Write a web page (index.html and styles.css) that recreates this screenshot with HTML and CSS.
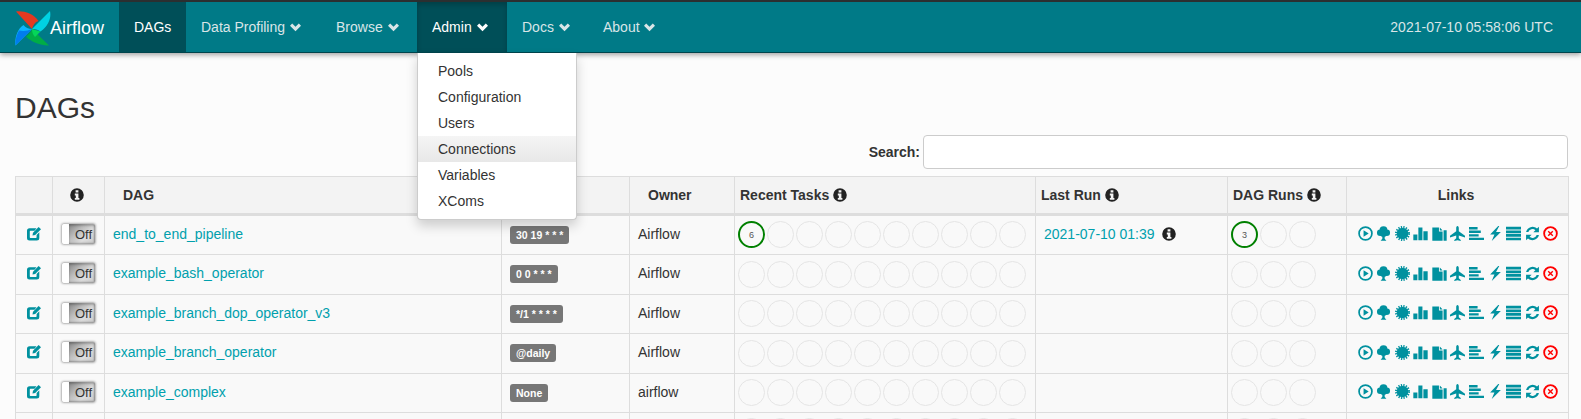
FILE: index.html
```html
<!DOCTYPE html>
<html lang="en">
<head>
<meta charset="utf-8">
<title>DAGs - Airflow</title>
<link rel="stylesheet" href="styles.css">
</head>
<body>
<svg class="defs" width="0" height="0" aria-hidden="true">
  <symbol id="i-chev" viewBox="0 0 11 9"><path d="M0 2.700 L2.200 .5 L5.500 3.800 L8.800 .5 L11 2.700 L5.500 8.200 Z"/></symbol>
  <symbol id="i-info" viewBox="0 0 14 14"><path fill-rule="evenodd" d="M7 .2a6.800 6.800 0 1 0 0 13.600A6.800 6.800 0 0 0 7 .2zM5.600 2.200h2.800v2.200H5.600zM4.800 5.600h3.600v4.400h1v1.800H4.800V10h1V7.400h-1z"/></symbol>
  <symbol id="i-edit" viewBox="0 0 14 14"><path fill-rule="evenodd" d="M2.500 1.200H9.500L7.500 3.800H3.400a.6.6 0 0 0-.6.6V10.300a.6.6 0 0 0 .6.6H9a.6.6 0 0 0 .6-.6V8L12.300 5.300V11a2.500 2.500 0 0 1-2.500 2.500H2.500A2.500 2.500 0 0 1 0 11V3.700A2.500 2.500 0 0 1 2.500 1.200Z"/><path d="M11.600 0L14 2.200L8.200 8L5.500 8.500L6 5.800Z"/></symbol>
  <symbol id="i-play" viewBox="0 0 14 14"><path fill-rule="evenodd" d="M7 .2a6.800 6.800 0 1 0 0 13.600A6.800 6.800 0 0 0 7 .2zM7 1.800a5.200 5.200 0 1 1 0 10.400A5.200 5.200 0 0 1 7 1.800z"/><path d="M5.200 4v6l4.800-3z"/></symbol>
  <symbol id="i-tree" viewBox="0 0 14 14"><circle cx="7" cy="3.900" r="3.700"/><circle cx="3.900" cy="6.300" r="3"/><circle cx="10.100" cy="6.300" r="3"/><circle cx="7" cy="7.200" r="3"/><path d="M5.900 9h2.200v2.800l1.600 1.900H4.300l1.600-1.900z"/></symbol>
  <symbol id="i-cert" viewBox="0 0 14 14"><circle cx="7" cy="7" r="5.400"/><circle cx="7" cy="7" r="6" fill="none" stroke="currentColor" stroke-width="2" stroke-dasharray="1.180 1.180"/></symbol>
  <symbol id="i-bars" viewBox="0 0 14 14"><path d="M.3 8h3.800v5.300H.3zM5 1.500h3.800v11.800H5zM9.700 5h4v8.300h-4z"/></symbol>
  <symbol id="i-files" viewBox="0 0 14 14"><path d="M.3 1.500h6.200v3.600h3.400v8.600H.3zM7.300 1.500l2.600 2.800H7.300zM10.800 4h2.900v9.700h-2.900z"/></symbol>
  <symbol id="i-plane" viewBox="0 0 14 14"><path d="M7 0C7.800 0 8.200 1 8.200 2V5L14 9V10.800L8.200 8.800V11.500L10 13V14L7 13.200L4 14V13L5.800 11.500V8.800L0 10.800V9L5.800 5V2C5.800 1 6.200 0 7 0Z"/></symbol>
  <symbol id="i-gantt" viewBox="0 0 14 14"><path d="M0 1h8v2.200H0zM0 4.300h11v2.200H0zM0 7.600h9v2.200H0zM0 10.900h14v2.200H0z"/></symbol>
  <symbol id="i-bolt" viewBox="0 0 14 14"><path d="M9.500 0L2 8H6L3.500 14L12 5.500H7.500L10.500 0Z"/></symbol>
  <symbol id="i-list" viewBox="0 0 14 14"><path d="M0 .8h14v2.500H0zM0 4.200h14v2.500H0zM0 7.500h14v2.500H0zM0 10.900h14v2.500H0z"/></symbol>
  <symbol id="i-sync" viewBox="0 0 14 14"><path d="M13 .6v5.200H7.800l1.900-1.900A4.100 4.100 0 0 0 3.100 5.700H1A6.200 6.200 0 0 1 11.200 2.400zM1 13.400V8.200h5.200l-1.900 1.900a4.100 4.100 0 0 0 6.600-1.800H13A6.200 6.200 0 0 1 2.800 11.600z"/></symbol>
  <symbol id="i-del" viewBox="0 0 14 14"><path fill-rule="evenodd" d="M7 .2a6.800 6.800 0 1 0 0 13.600A6.800 6.800 0 0 0 7 .2zM7 1.900a5.100 5.100 0 1 1 0 10.200A5.100 5.100 0 0 1 7 1.900z"/><path d="M5.300 4.400L7 6.100 8.700 4.400 9.600 5.300 7.900 7 9.600 8.700 8.700 9.600 7 7.900 5.300 9.600 4.400 8.700 6.100 7 4.400 5.300z"/></symbol>
</svg>

<nav class="navbar">
  <a class="brand">
    <svg class="logo" viewBox="0 0 36 36" width="36" height="36" aria-hidden="true">
      <path fill="#e43921" d="M17 19 L1 1.500 C8 .5 18 3 23.500 11 C20 12 18 15 17 19Z"/>
      <path fill="#00d2e3" d="M17 19 L35 1 C36.500 8 33.500 16 25.500 21.500 C23 19.500 20 19 17 19Z"/>
      <path fill="#00ad46" d="M17 19 L34 35.500 C27 36 16 32 11 26.500 C13.500 25 16 22 17 19Z"/>
      <path fill="#04d659" d="M17 19 L25.500 21.500 L20 27 C18 25 17 22 17 19Z"/>
      <path fill="#0cb6ff" d="M17 19 L.5 35.500 C-.5 29 2 19 8.500 15 C10.500 17.500 13.500 19 17 19Z"/>
      <path fill="#017cee" d="M17 19 L.5 35.500 C0 30 1.500 25 4 20.500 C8 21.500 13 21 17 19Z"/>
    </svg>
    <span class="brand-name">Airflow</span>
  </a>
  <ul class="nav">
    <li class="nav-item nav-active w-dags"><a>DAGs</a></li>
    <li class="nav-item w-profiling"><a>Data Profiling <svg class="chev"><use href="#i-chev"/></svg></a></li>
    <li class="nav-item w-browse"><a>Browse <svg class="chev"><use href="#i-chev"/></svg></a></li>
    <li class="nav-item nav-open w-admin">
      <a>Admin <svg class="chev"><use href="#i-chev"/></svg></a>
      <ul class="menu">
        <li>Pools</li>
        <li>Configuration</li>
        <li>Users</li>
        <li class="menu-hover">Connections</li>
        <li>Variables</li>
        <li>XComs</li>
      </ul>
    </li>
    <li class="nav-item w-docs"><a>Docs <svg class="chev"><use href="#i-chev"/></svg></a></li>
    <li class="nav-item w-about"><a>About <svg class="chev"><use href="#i-chev"/></svg></a></li>
  </ul>
  <span class="clock">2021-07-10 05:58:06 UTC</span>
</nav>

<main class="page">
  <h2 class="title">DAGs</h2>
  <div class="search-row">
    <label class="search-label">Search:</label>
    <input class="search-input" type="text">
  </div>
  <table class="dags">
    <colgroup>
      <col class="c-edit"><col class="c-toggle"><col class="c-dag"><col class="c-sched"><col class="c-owner"><col class="c-tasks"><col class="c-last"><col class="c-runs"><col class="c-links">
    </colgroup>
    <thead>
      <tr>
        <th></th>
        <th class="center"><svg class="info"><use href="#i-info"/></svg></th>
        <th class="th-wide">DAG</th>
        <th class="th-sched">Schedule</th>
        <th class="th-wide">Owner</th>
        <th>Recent Tasks <svg class="info"><use href="#i-info"/></svg></th>
        <th>Last Run <svg class="info"><use href="#i-info"/></svg></th>
        <th>DAG Runs <svg class="info"><use href="#i-info"/></svg></th>
        <th class="center">Links</th>
      </tr>
    </thead>
    <tbody>
      <tr>
        <td class="center"><svg class="edit"><use href="#i-edit"/></svg></td>
        <td class="center"><span class="toggle"><span class="toggle-knob"></span><span class="toggle-off">Off</span></span></td>
        <td><a class="link">end_to_end_pipeline</a></td>
        <td><span class="badge">30 19 * * *</span></td>
        <td>Airflow</td>
        <td class="cell-circles"><span class="circles"><span class="ring ring-run">6</span><span class="ring"></span><span class="ring"></span><span class="ring"></span><span class="ring"></span><span class="ring"></span><span class="ring"></span><span class="ring"></span><span class="ring"></span><span class="ring"></span></span></td>
        <td class="cell-last"><a class="link">2021-07-10 01:39</a><svg class="info info-last"><use href="#i-info"/></svg></td>
        <td class="cell-circles"><span class="circles"><span class="ring ring-run">3</span><span class="ring"></span><span class="ring"></span></span></td>
        <td class="cell-links"><span class="links"><svg><use href="#i-play"/></svg><svg><use href="#i-tree"/></svg><svg><use href="#i-cert"/></svg><svg><use href="#i-bars"/></svg><svg><use href="#i-files"/></svg><svg><use href="#i-plane"/></svg><svg><use href="#i-gantt"/></svg><svg><use href="#i-bolt"/></svg><svg><use href="#i-list"/></svg><svg><use href="#i-sync"/></svg><svg class="del"><use href="#i-del"/></svg></span></td>
      </tr>
      <tr>
        <td class="center"><svg class="edit"><use href="#i-edit"/></svg></td>
        <td class="center"><span class="toggle"><span class="toggle-knob"></span><span class="toggle-off">Off</span></span></td>
        <td><a class="link">example_bash_operator</a></td>
        <td><span class="badge">0 0 * * *</span></td>
        <td>Airflow</td>
        <td class="cell-circles"><span class="circles"><span class="ring"></span><span class="ring"></span><span class="ring"></span><span class="ring"></span><span class="ring"></span><span class="ring"></span><span class="ring"></span><span class="ring"></span><span class="ring"></span><span class="ring"></span></span></td>
        <td class="cell-last"></td>
        <td class="cell-circles"><span class="circles"><span class="ring"></span><span class="ring"></span><span class="ring"></span></span></td>
        <td class="cell-links"><span class="links"><svg><use href="#i-play"/></svg><svg><use href="#i-tree"/></svg><svg><use href="#i-cert"/></svg><svg><use href="#i-bars"/></svg><svg><use href="#i-files"/></svg><svg><use href="#i-plane"/></svg><svg><use href="#i-gantt"/></svg><svg><use href="#i-bolt"/></svg><svg><use href="#i-list"/></svg><svg><use href="#i-sync"/></svg><svg class="del"><use href="#i-del"/></svg></span></td>
      </tr>
      <tr>
        <td class="center"><svg class="edit"><use href="#i-edit"/></svg></td>
        <td class="center"><span class="toggle"><span class="toggle-knob"></span><span class="toggle-off">Off</span></span></td>
        <td><a class="link">example_branch_dop_operator_v3</a></td>
        <td><span class="badge">*/1 * * * *</span></td>
        <td>Airflow</td>
        <td class="cell-circles"><span class="circles"><span class="ring"></span><span class="ring"></span><span class="ring"></span><span class="ring"></span><span class="ring"></span><span class="ring"></span><span class="ring"></span><span class="ring"></span><span class="ring"></span><span class="ring"></span></span></td>
        <td class="cell-last"></td>
        <td class="cell-circles"><span class="circles"><span class="ring"></span><span class="ring"></span><span class="ring"></span></span></td>
        <td class="cell-links"><span class="links"><svg><use href="#i-play"/></svg><svg><use href="#i-tree"/></svg><svg><use href="#i-cert"/></svg><svg><use href="#i-bars"/></svg><svg><use href="#i-files"/></svg><svg><use href="#i-plane"/></svg><svg><use href="#i-gantt"/></svg><svg><use href="#i-bolt"/></svg><svg><use href="#i-list"/></svg><svg><use href="#i-sync"/></svg><svg class="del"><use href="#i-del"/></svg></span></td>
      </tr>
      <tr>
        <td class="center"><svg class="edit"><use href="#i-edit"/></svg></td>
        <td class="center"><span class="toggle"><span class="toggle-knob"></span><span class="toggle-off">Off</span></span></td>
        <td><a class="link">example_branch_operator</a></td>
        <td><span class="badge">@daily</span></td>
        <td>Airflow</td>
        <td class="cell-circles"><span class="circles"><span class="ring"></span><span class="ring"></span><span class="ring"></span><span class="ring"></span><span class="ring"></span><span class="ring"></span><span class="ring"></span><span class="ring"></span><span class="ring"></span><span class="ring"></span></span></td>
        <td class="cell-last"></td>
        <td class="cell-circles"><span class="circles"><span class="ring"></span><span class="ring"></span><span class="ring"></span></span></td>
        <td class="cell-links"><span class="links"><svg><use href="#i-play"/></svg><svg><use href="#i-tree"/></svg><svg><use href="#i-cert"/></svg><svg><use href="#i-bars"/></svg><svg><use href="#i-files"/></svg><svg><use href="#i-plane"/></svg><svg><use href="#i-gantt"/></svg><svg><use href="#i-bolt"/></svg><svg><use href="#i-list"/></svg><svg><use href="#i-sync"/></svg><svg class="del"><use href="#i-del"/></svg></span></td>
      </tr>
      <tr>
        <td class="center"><svg class="edit"><use href="#i-edit"/></svg></td>
        <td class="center"><span class="toggle"><span class="toggle-knob"></span><span class="toggle-off">Off</span></span></td>
        <td><a class="link">example_complex</a></td>
        <td><span class="badge">None</span></td>
        <td>airflow</td>
        <td class="cell-circles"><span class="circles"><span class="ring"></span><span class="ring"></span><span class="ring"></span><span class="ring"></span><span class="ring"></span><span class="ring"></span><span class="ring"></span><span class="ring"></span><span class="ring"></span><span class="ring"></span></span></td>
        <td class="cell-last"></td>
        <td class="cell-circles"><span class="circles"><span class="ring"></span><span class="ring"></span><span class="ring"></span></span></td>
        <td class="cell-links"><span class="links"><svg><use href="#i-play"/></svg><svg><use href="#i-tree"/></svg><svg><use href="#i-cert"/></svg><svg><use href="#i-bars"/></svg><svg><use href="#i-files"/></svg><svg><use href="#i-plane"/></svg><svg><use href="#i-gantt"/></svg><svg><use href="#i-bolt"/></svg><svg><use href="#i-list"/></svg><svg><use href="#i-sync"/></svg><svg class="del"><use href="#i-del"/></svg></span></td>
      </tr>
      <tr>
        <td></td><td></td><td></td><td></td><td></td>
        <td class="cell-circles"><span class="circles"><span class="ring"></span><span class="ring"></span><span class="ring"></span><span class="ring"></span><span class="ring"></span><span class="ring"></span><span class="ring"></span><span class="ring"></span><span class="ring"></span><span class="ring"></span></span></td>
        <td></td>
        <td class="cell-circles"><span class="circles"><span class="ring"></span><span class="ring"></span><span class="ring"></span></span></td>
        <td></td>
      </tr>
    </tbody>
  </table>
</main>
</body>
</html>
```
FILE: styles.css
```css
* { box-sizing: border-box; }
html, body { height: 419px; overflow: hidden; }
body {
  margin: 0;
  background: #fcfcfc;
  color: #333;
  font-family: "Liberation Sans", Arial, sans-serif;
  font-size: 14px;
  line-height: 20px;
}
.defs { position: absolute; }

.navbar {
  display: flex;
  align-items: stretch;
  height: 53px;
  background: #007a87;
  border-top: 2px solid #2b2f30;
  border-bottom: 1px solid #00454d;
  box-shadow: 0 2px 5px rgba(0, 0, 0, .35);
  position: relative;
  z-index: 5;
}
.brand { display: flex; align-items: center; width: 119px; padding-left: 15px; }
.logo { flex: none; margin-top: 1px; }
.brand-name { color: #fff; font-size: 18px; margin-left: -1px; margin-top: 1px; }
.nav { display: flex; list-style: none; margin: 0; padding: 0; }
.nav-item { position: relative; display: flex; }
.nav-item > a { display: flex; align-items: center; width: 100%; padding: 0 0 0 15px; color: #d9e5e7; white-space: pre; }
.w-dags { width: 67px; }
.w-profiling { width: 135px; }
.w-browse { width: 96px; }
.w-admin { width: 90px; }
.w-docs { width: 81px; }
.w-about { width: 88px; }
.nav-active > a { background: #004f58; color: #fff; }
.nav-open > a { background: #004f58; color: #fff; box-shadow: inset 0 3px 5px rgba(0,0,0,.2); }
.chev { width: 11px; height: 9px; margin-left: 1px; fill: currentColor; }
.clock { margin-left: auto; align-self: center; padding-right: 28px; color: #d9e5e7; font-size: 14px; }

.menu {
  position: absolute;
  top: 51px;
  left: 0;
  width: 160px;
  margin: 0;
  padding: 5px 0;
  list-style: none;
  background: #fff;
  border: 1px solid #ccc;
  border-top: 0;
  border-radius: 0 0 4px 4px;
  box-shadow: 0 6px 12px rgba(0, 0, 0, .175);
}
.menu li { height: 26px; line-height: 26px; padding-left: 20px; color: #333; }
.menu .menu-hover { background: linear-gradient(#f5f5f5, #e8e8e8); }

.page { padding: 0 13px 0 15px; }
.title { margin: 38px 0 0; height: 33px; font-size: 30px; font-weight: 500; line-height: 33px; }
.search-row { display: flex; justify-content: flex-end; align-items: center; gap: 3px; margin-top: 11px; }
.search-label { font-size: 14px; font-weight: 700; }
.search-input { width: 645px; height: 34px; background: #fff; border: 1px solid #ccc; border-radius: 4px; }

.dags { width: 1553px; margin-top: 7px; table-layout: fixed; border-collapse: collapse; background: #f9f9f9; }
.c-edit { width: 37px; }
.c-toggle { width: 52px; }
.c-dag { width: 397px; }
.c-sched { width: 128px; }
.c-owner { width: 105px; }
.c-tasks { width: 301px; }
.c-last { width: 192px; }
.c-runs { width: 119px; }
.c-links { width: 222px; }
.dags th, .dags td { border: 1px solid #ddd; padding: 0 8px; text-align: left; vertical-align: middle; }
.dags th { height: 38px; background: #f3f3f3; border-bottom: 3px solid #ddd; font-weight: 700; padding-left: 5px; white-space: nowrap; }
.dags td { height: 40px; padding-bottom: 2px; }
.dags tr:nth-child(even) td:not(.cell-circles):not(.cell-links) { padding-bottom: 4px; }
.dags tr:nth-child(3) td, .dags tr:nth-child(5) td, .dags tr:nth-child(6) td { height: 39px; }
.dags .center { text-align: center; }
.dags .th-wide { padding-left: 18px; }
.dags .th-sched { padding-left: 8px; }

.info { width: 14px; height: 14px; fill: #222; vertical-align: -2px; }
.info-last { margin-left: 7px; }
.edit { width: 14px; height: 14px; fill: #00919f; display: block; margin: 0 auto; }
.link { color: #00a0ad; }

.toggle { display: inline-flex; width: 35px; height: 22px; border-radius: 3px; overflow: hidden; vertical-align: middle; border: 1px solid #c4c4c4; box-shadow: 0 0 2px rgba(0,0,0,.3); }
.toggle-knob { width: 7px; background: #fff; flex: none; border-radius: 3px; }
.toggle-off { flex: 1; font-size: 13px; line-height: 22px; text-align: right; padding-right: 3px; background: linear-gradient(135deg, #858585 0%, #bcbcbc 35%, #dedede 65%, #cacaca 100%); box-shadow: inset -1px -1px 2px rgba(0,0,0,.3), inset 0 2px 2px rgba(0,0,0,.2); }

.badge { display: inline-block; padding: 3px 6px; background: #777; color: #fff; border-radius: 3px; font-size: 10.500px; font-weight: 700; line-height: 12px; vertical-align: middle; }

.dags .cell-circles { padding: 0 0 1px 3px; }
.circles { display: flex; gap: 2px; }
.ring { display: flex; align-items: center; justify-content: center; width: 27px; height: 27px; border: 1px solid #e5e5e5; border-radius: 50%; font-size: 9px; color: #555; }
.ring-run { border: 2px solid #008000; }
.dags .cell-last { padding-left: 8px; }
.dags .cell-links { padding: 0 0 3px 10.500px; }
.links { display: flex; gap: 3.600px; align-items: center; }
.links svg { width: 15px; height: 15px; fill: #00919f; color: #00919f; flex: none; }
.links .del { fill: #f00; }
```
